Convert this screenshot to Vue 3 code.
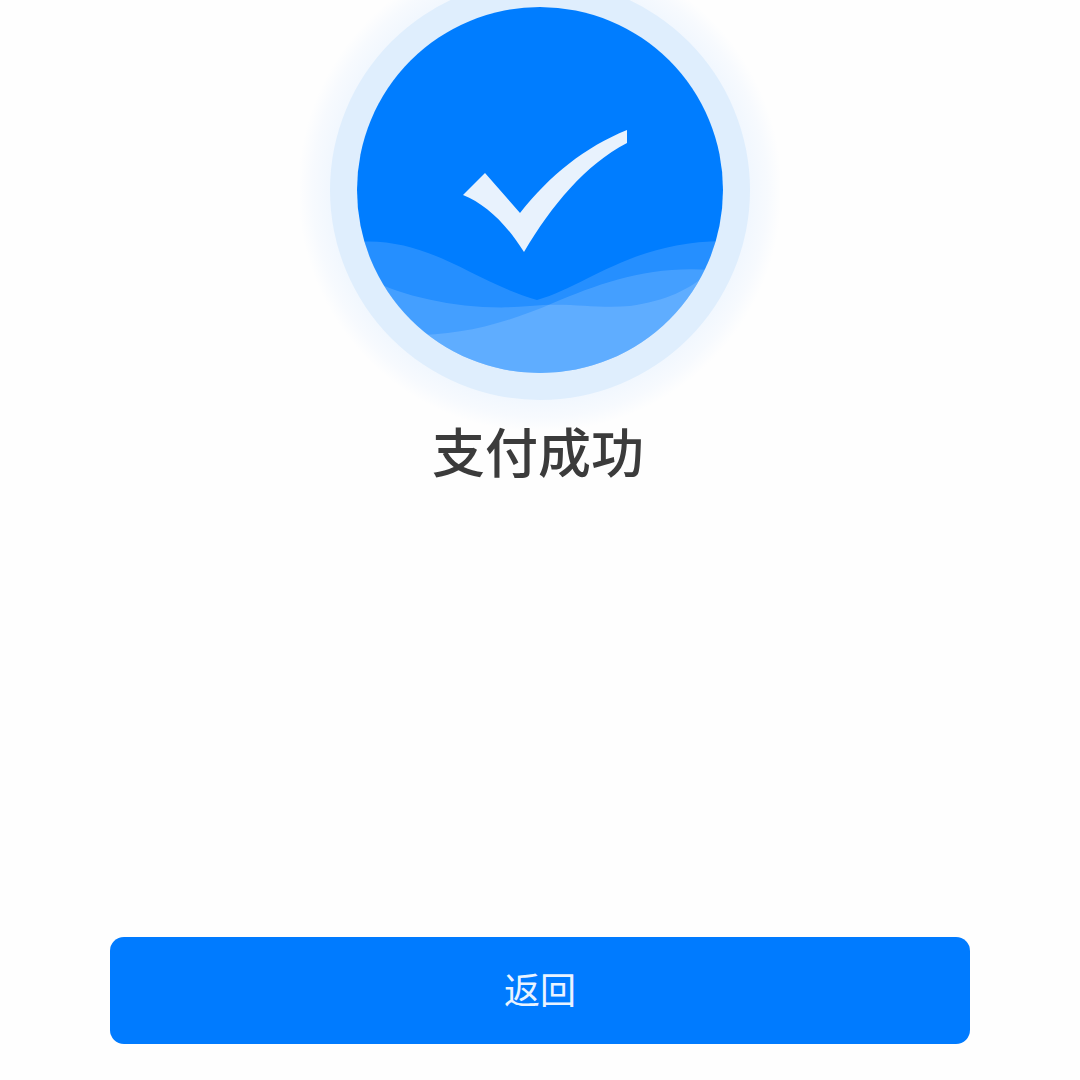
<script setup>
const title = '支付成功'
const action = '返回'
</script>

<template>
  <div class="page">
    <svg class="badge" viewBox="300 -50 480 480" aria-hidden="true">
      <defs>
        <radialGradient id="halo" gradientUnits="userSpaceOnUse" cx="540" cy="190" r="242">
          <stop offset="0.86" stop-color="#f1f7fe" />
          <stop offset="0.94" stop-color="#f7fafe" />
          <stop offset="1" stop-color="#fefefe" />
        </radialGradient>
        <clipPath id="disc"><circle cx="540" cy="190" r="183" /></clipPath>
      </defs>
      <circle cx="540" cy="190" r="242" fill="url(#halo)" />
      <circle cx="540" cy="190" r="210" fill="#dfeefd" />
      <circle cx="540" cy="190" r="183" fill="#007dff" />
      <g clip-path="url(#disc)" fill="#ffffff" fill-opacity="0.145">
        <path d="M345 243C425 232 470 281 537 300C590 285 635 238 735 241V400H345Z" />
        <path d="M360 274C400 298 470 312 530 306C570 302 595 309 630 306C665 301 690 290 712 270V400H360Z" />
        <path d="M395 335C450 337 495 328 553 303C600 283 650 265 712 270V400H395Z" />
      </g>
      <path
        d="M463 195L485 173L520 213C550 175 585 147 627 130V143C585 165 552 205 524 252C505 222 485 204 463 195Z"
        fill="#e8f2fd"
      />
    </svg>
    <h1 class="title">{{ title }}</h1>
    <button class="action" type="button">{{ action }}</button>
  </div>
</template>

<style scoped>
.page {
  width: 1080px;
  height: 1080px;
  background: #fefefe;
  display: flex;
  flex-direction: column;
  align-items: center;
  overflow: hidden;
  font-family: "Noto Sans CJK SC", "Noto Sans", sans-serif;
}
.badge {
  display: block;
  width: 480px;
  height: 480px;
  flex: none;
  margin-top: -50px;
}
.title {
  margin: -10px 4px 0 0;
  font-size: 53px;
  line-height: 60px;
  font-weight: 500;
  color: #3b3b3b;
}
.action {
  width: 860px;
  height: 107px;
  margin-top: auto;
  margin-bottom: 36px;
  padding: 0 0 5px;
  border: 0;
  border-radius: 14px;
  background: #007bff;
  color: #e9f3ff;
  font-family: inherit;
  font-size: 36px;
  font-weight: 400;
}
</style>
